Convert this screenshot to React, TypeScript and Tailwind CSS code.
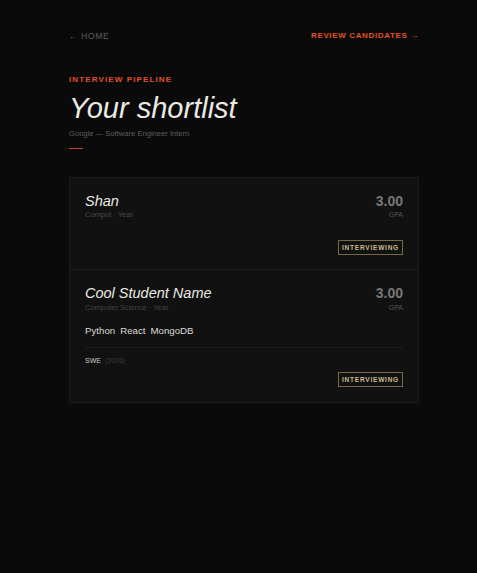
import React from "react";

function Badge() {
  return (
    <div className="flex justify-end">
      <span className="border border-[#776846] w-[65px] h-[15px] flex items-center justify-center text-[6.5px] font-bold tracking-[0.12em] text-[#cdbb8e]">
        INTERVIEWING
      </span>
    </div>
  );
}

export default function App() {
  return (
    <div
      className="min-h-screen bg-[#0a0a0a] text-[#e8e4dc]"
      style={{ fontFamily: '"Liberation Sans", Arial, sans-serif' }}
    >
      <div className="ml-[69px] w-[350px] pt-[31px] pb-10">
        <div className="flex justify-between items-center h-[10px]">
          <span className="text-[8.5px] tracking-[0.08em] text-[#5e5e5e]">← HOME</span>
          <span className="text-[8px] font-bold tracking-[0.08em] text-[#e0522b]">REVIEW CANDIDATES →</span>
        </div>

        <div className="mt-[34px] text-[8px] font-bold tracking-[0.14em] text-[#e0522b] leading-[10px]">
          INTERVIEW PIPELINE
        </div>
        <h1 className="mt-[6px] text-[29px] italic leading-[34px] text-[#ece9e2]">Your shortlist</h1>
        <div className="mt-[4px] text-[7.6px] text-[#5e5e5e] leading-[10px]">Google — Software Engineer Intern</div>
        <div className="mt-[9px] w-[14px] h-px bg-[#c9442a]" />

        <div className="mt-[28px] border border-[#1c1c1c] bg-[#111111]">
          <div className="px-[15px] pt-[14px] pb-[14px]">
            <div className="flex justify-between">
              <div>
                <div className="text-[14.5px] italic leading-[18px] text-[#ece9e2]">Shan</div>
                <div className="text-[7.5px] leading-[10px] text-[#4a4a4a]">Comput · Year</div>
              </div>
              <div className="text-right">
                <div className="text-[14px] font-bold leading-[18px] text-[#777777]">3.00</div>
                <div className="text-[7px] leading-[10px] text-[#555555]">GPA</div>
              </div>
            </div>
            <div className="mt-[20px]">
              <Badge />
            </div>
          </div>

          <div className="border-t border-[#1c1c1c] px-[15px] pt-[14px] pb-[15px]">
            <div className="flex justify-between">
              <div>
                <div className="text-[14.5px] italic leading-[18px] text-[#ece9e2]">Cool Student Name</div>
                <div className="mt-px text-[7.5px] leading-[10px] text-[#424242]">Computer Science · Year</div>
              </div>
              <div className="text-right">
                <div className="text-[14px] font-bold leading-[18px] text-[#777777]">3.00</div>
                <div className="mt-px text-[7px] leading-[10px] text-[#555555]">GPA</div>
              </div>
            </div>
            <div className="mt-[12px] flex gap-[5px] text-[9.7px] leading-[12px] text-[#dedbd4]">
              <span>Python</span>
              <span>React</span>
              <span>MongoDB</span>
            </div>
            <div className="mt-[10px] border-t border-[#1d1d1d] pt-[8px] text-[7px] leading-[10px]">
              <span className="text-[#cfcbc3]">SWE</span>
              <span className="ml-[4px] text-[#3c3c3c]">(2026)</span>
            </div>
            <div className="mt-[6px]">
              <Badge />
            </div>
          </div>
        </div>
      </div>
    </div>
  );
}
